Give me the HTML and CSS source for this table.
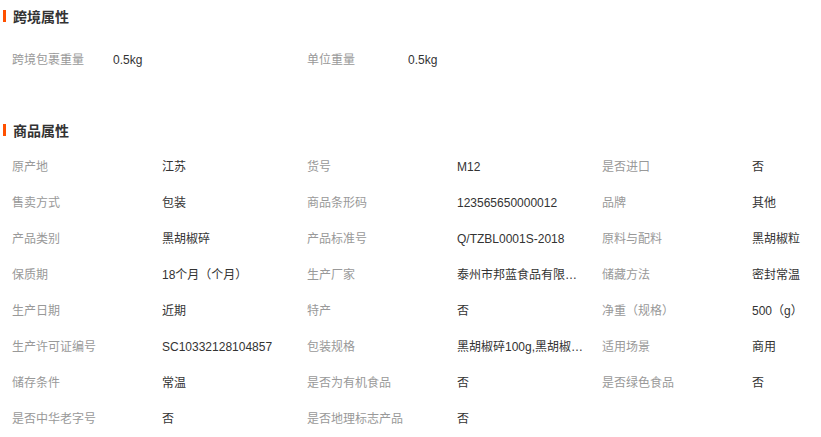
FILE: index.html
```html
<!DOCTYPE html>
<html lang="zh-CN">
<head>
    <meta charset="UTF-8">
    <meta name="viewport" content="width=device-width, initial-scale=1.0">
    <title>商品属性</title>
    <link rel="stylesheet" href="styles.css">
</head>
<body>
    <div class="attr-section cross">
        <h3 class="attr-title"><span class="bar"></span>跨境属性</h3>
        <ul class="attr-list">
            <li><span class="attr-name">跨境包裹重量</span><span class="attr-value">0.5kg</span></li>
            <li><span class="attr-name">单位重量</span><span class="attr-value">0.5kg</span></li>
        </ul>
    </div>

    <div class="attr-section goods">
        <h3 class="attr-title"><span class="bar"></span>商品属性</h3>
        <ul class="attr-list">
            <li><span class="attr-name">原产地</span><span class="attr-value">江苏</span></li>
            <li><span class="attr-name">货号</span><span class="attr-value">M12</span></li>
            <li><span class="attr-name">是否进口</span><span class="attr-value">否</span></li>

            <li><span class="attr-name">售卖方式</span><span class="attr-value">包装</span></li>
            <li><span class="attr-name">商品条形码</span><span class="attr-value">123565650000012</span></li>
            <li><span class="attr-name">品牌</span><span class="attr-value">其他</span></li>

            <li><span class="attr-name">产品类别</span><span class="attr-value">黑胡椒碎</span></li>
            <li><span class="attr-name">产品标准号</span><span class="attr-value">Q/TZBL0001S-2018</span></li>
            <li><span class="attr-name">原料与配料</span><span class="attr-value">黑胡椒粒</span></li>

            <li><span class="attr-name">保质期</span><span class="attr-value">18个月（个月）</span></li>
            <li><span class="attr-name">生产厂家</span><span class="attr-value" title="泰州市邦蓝食品有限公司">泰州市邦蓝食品有限公司</span></li>
            <li><span class="attr-name">储藏方法</span><span class="attr-value">密封常温</span></li>

            <li><span class="attr-name">生产日期</span><span class="attr-value">近期</span></li>
            <li><span class="attr-name">特产</span><span class="attr-value">否</span></li>
            <li><span class="attr-name">净重（规格）</span><span class="attr-value">500（g）</span></li>

            <li><span class="attr-name">生产许可证编号</span><span class="attr-value">SC10332128104857</span></li>
            <li><span class="attr-name">包装规格</span><span class="attr-value" title="黑胡椒碎100g,黑胡椒粉100g">黑胡椒碎100g,黑胡椒粉100g</span></li>
            <li><span class="attr-name">适用场景</span><span class="attr-value">商用</span></li>

            <li><span class="attr-name">储存条件</span><span class="attr-value">常温</span></li>
            <li><span class="attr-name">是否为有机食品</span><span class="attr-value">否</span></li>
            <li><span class="attr-name">是否绿色食品</span><span class="attr-value">否</span></li>

            <li><span class="attr-name">是否中华老字号</span><span class="attr-value">否</span></li>
            <li><span class="attr-name">是否地理标志产品</span><span class="attr-value">否</span></li>
        </ul>
    </div>
</body>
</html>
```

FILE: styles.css
```css
body {
    margin: 0;
    padding-top: 3px;
    font-family: "Liberation Sans", "Noto Sans CJK SC", sans-serif;
    font-size: 12px;
    color: #333;
    background-color: #fff;
    overflow: hidden;
}

.attr-title {
    display: flex;
    align-items: center;
    height: 26px;
    margin: 0;
    padding-left: 3px;
    font-size: 14px;
    font-weight: bold;
    color: #333;
}

.attr-title .bar {
    width: 3px;
    height: 12px;
    margin-right: 7px;
    background-color: #ff5000;
}

.attr-list {
    list-style-type: none;
    margin: 0;
    padding: 0 0 0 12px;
    display: grid;
    grid-template-columns: repeat(3, 295px);
}

.attr-list li {
    display: flex;
    height: 36px;
    line-height: 36px;
    white-space: nowrap;
}

.attr-name {
    width: 150px;
    flex-shrink: 0;
    color: #999;
}

.attr-value {
    width: 130px;
    overflow: hidden;
    text-overflow: ellipsis;
    color: #333;
}

.cross .attr-list {
    margin-top: 13px;
    margin-bottom: 39px;
}

.cross .attr-name {
    width: 101px;
}

.goods .attr-list {
    margin-top: 6px;
}
```
